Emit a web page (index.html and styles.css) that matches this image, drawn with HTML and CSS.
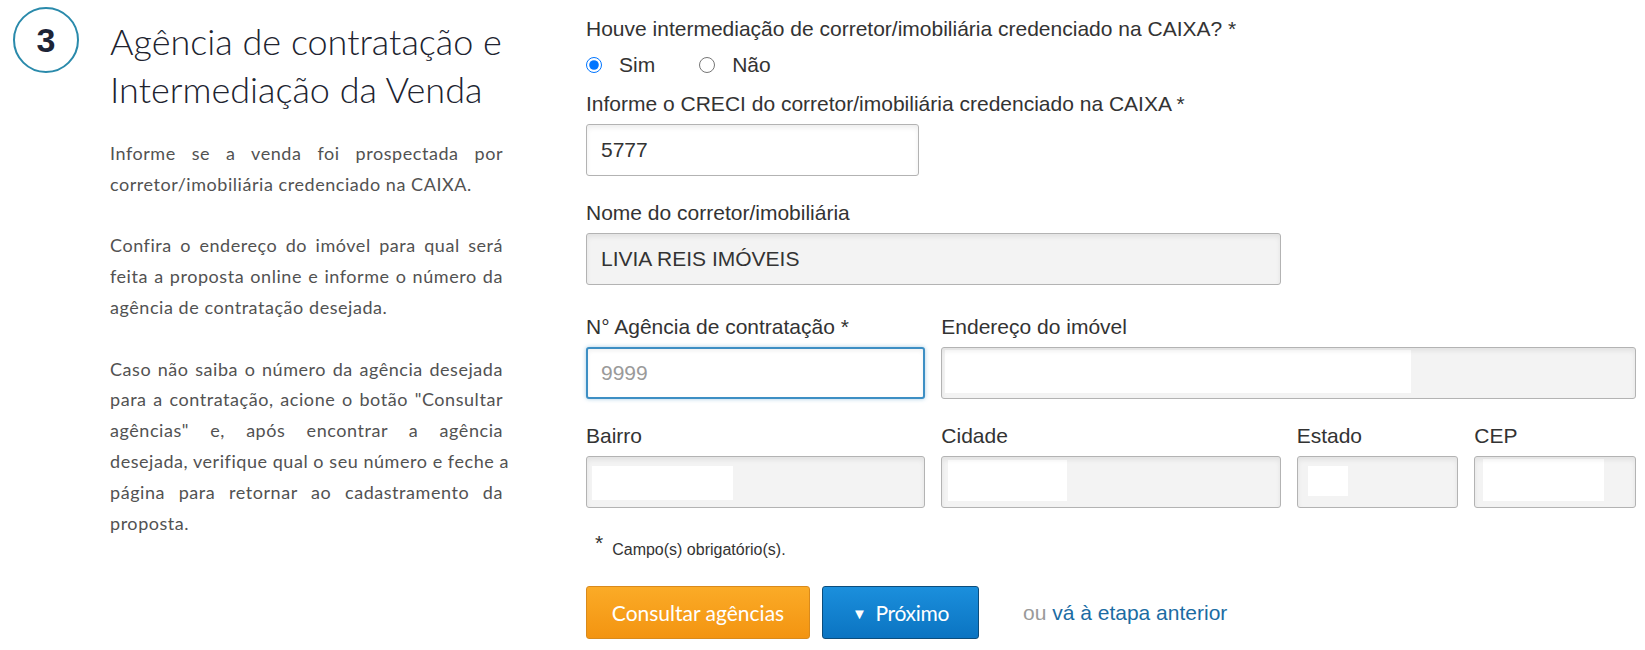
FILE: index.html
```html
<!DOCTYPE html>
<html lang="pt-BR">
<head>
<meta charset="utf-8">
<title>Agência de contratação e Intermediação da Venda</title>
<link rel="stylesheet" href="styles.css">
</head>
<body>
<main class="page">
  <aside class="intro">
    <header class="step-head">
      <div class="step-num">3</div>
      <h2 class="step-title">Agência de contratação e<br>Intermediação da Venda</h2>
    </header>
    <div class="step-text">
      <p>
        <span class="jl">Informe se a venda foi prospectada por</span>
        <span class="ll">corretor/imobiliária credenciado na CAIXA.</span>
      </p>
      <p>
        <span class="jl">Confira o endereço do imóvel para qual será</span>
        <span class="jl">feita a proposta online e informe o número da</span>
        <span class="ll">agência de contratação desejada.</span>
      </p>
      <p>
        <span class="jl">Caso não saiba o número da agência desejada</span>
        <span class="jl">para a contratação, acione o botão "Consultar</span>
        <span class="jl">agências" e, após encontrar a agência</span>
        <span class="jl">desejada, verifique qual o seu número e feche a</span>
        <span class="jl">página para retornar ao cadastramento da</span>
        <span class="ll">proposta.</span>
      </p>
    </div>
  </aside>

  <form class="form">
    <div class="field field-radio">
      <div class="label">Houve intermediação de corretor/imobiliária credenciado na CAIXA? *</div>
      <div class="radios">
        <label class="radio"><input type="radio" name="inter" checked> Sim</label>
        <label class="radio"><input type="radio" name="inter"> Não</label>
      </div>
    </div>

    <div class="row">
      <div class="field span-6">
        <label class="label" for="creci">Informe o CRECI do corretor/imobiliária credenciado na CAIXA *</label>
        <input class="input input-creci" id="creci" type="text" value="5777">
      </div>
    </div>

    <div class="row row-wide-gap">
      <div class="field span-4">
        <label class="label" for="nome">Nome do corretor/imobiliária</label>
        <input class="input input-ro" id="nome" type="text" value="LIVIA REIS IMÓVEIS" readonly>
      </div>
    </div>

    <div class="row">
      <div class="field span-2">
        <label class="label" for="agencia">N° Agência de contratação *</label>
        <input class="input input-focus" id="agencia" type="text" placeholder="9999">
      </div>
      <div class="field span-4">
        <label class="label" for="endereco">Endereço do imóvel</label>
        <input class="input input-ro redact-endereco" id="endereco" type="text" readonly>
      </div>
    </div>

    <div class="row">
      <div class="field span-2">
        <label class="label" for="bairro">Bairro</label>
        <input class="input input-ro redact-bairro" id="bairro" type="text" readonly>
      </div>
      <div class="field span-2">
        <label class="label" for="cidade">Cidade</label>
        <input class="input input-ro redact-cidade" id="cidade" type="text" readonly>
      </div>
      <div class="field span-1">
        <label class="label" for="estado">Estado</label>
        <input class="input input-ro redact-estado" id="estado" type="text" readonly>
      </div>
      <div class="field span-1">
        <label class="label" for="cep">CEP</label>
        <input class="input input-ro redact-cep" id="cep" type="text" readonly>
      </div>
    </div>

    <p class="footnote"><span class="star">*</span>Campo(s) obrigatório(s).</p>

    <div class="actions">
      <button type="button" class="btn btn-orange">Consultar agências</button>
      <button type="button" class="btn btn-blue"><span class="caret">&#9660;</span>Próximo</button>
      <span class="back">ou <a href="#" class="back-link">vá à etapa anterior</a></span>
    </div>
  </form>
</main>
</body>
</html>
```
FILE: styles.css
```css
* { box-sizing: border-box; }

html, body {
  margin: 0;
  padding: 0;
  background: #fff;
}

.page {
  display: flex;
  align-items: flex-start;
  width: 1645px;
}

/* ---------- left column ---------- */
.intro {
  width: 503px;
  flex: none;
  padding-left: 13px;
  padding-top: 7px;
}

.step-head {
  display: flex;
  align-items: flex-start;
  gap: 31px;
}

.step-num {
  width: 66px;
  height: 66px;
  flex: none;
  border: 2px solid #2a8aab;
  border-radius: 50%;
  display: flex;
  align-items: center;
  justify-content: center;
  font-family: "Liberation Sans", Arial, sans-serif;
  font-weight: bold;
  font-size: 34px;
  color: #1d2437;
}

.step-title {
  margin: 10px 0 0;
  font-family: Lato, "Noto Sans", sans-serif;
  font-weight: 300;
  font-size: 36px;
  line-height: 48px;
  color: #20232f;
  white-space: nowrap;
}

.step-text {
  margin-left: 97px;
  width: 393px;
  margin-top: 25px;
  font-family: Lato, "Noto Sans", sans-serif;
  font-size: 18px;
  letter-spacing: 0.55px;
  line-height: 30.8px;
  color: #525252;
}

.step-text p {
  margin: 0 0 30.8px;
}

.jl {
  display: block;
  text-align: justify;
  text-align-last: justify;
  white-space: nowrap;
}

.ll {
  display: block;
  text-align: left;
}

/* ---------- right column ---------- */
.form {
  margin-left: 83px;
  width: 1050px;
  padding-top: 17px;
  font-family: "Liberation Sans", Arial, sans-serif;
  color: #333;
}

.row {
  display: grid;
  grid-template-columns: repeat(6, 1fr);
  column-gap: 16px;
  margin-bottom: 25px;
}

.row-wide-gap { margin-bottom: 30px; }

.span-6 { grid-column: span 6; }
.span-4 { grid-column: span 4; }
.span-2 { grid-column: span 2; }
.span-1 { grid-column: span 1; }

.field {
  display: flex;
  flex-direction: column;
}

.label {
  display: block;
  font-size: 21px;
  line-height: 24px;
  margin-bottom: 8px;
  color: #333;
  white-space: nowrap;
}

.radios {
  display: flex;
  align-items: center;
  margin-top: 4px;
  margin-bottom: 15px;
  height: 24px;
}

.radio {
  display: flex;
  align-items: center;
  font-size: 21px;
  line-height: 24px;
  color: #333;
  gap: 17px;
  margin-right: 44px;
}

.radio input {
  width: 16px;
  height: 16px;
  margin: 0;
}

.input {
  height: 52px;
  width: 100%;
  border: 1px solid #b3b3b3;
  border-radius: 3px;
  padding: 0 14px;
  font-family: "Liberation Sans", Arial, sans-serif;
  font-size: 21px;
  color: #333;
  background: #fff;
  box-shadow: inset 0 3px 5px rgba(0, 0, 0, 0.07);
  outline: none;
}

.input-creci { width: 333px; }

.input-ro {
  background-color: #f3f3f3;
}

.input-focus {
  border: 2px solid #3d8fc4;
  padding-left: 13px;
  box-shadow: inset 0 2px 4px rgba(0, 0, 0, 0.06), 0 0 4px rgba(61, 143, 196, 0.45);
}

.input-focus::placeholder { color: #9a9a9a; }

.redact-endereco,
.redact-bairro,
.redact-cidade,
.redact-estado,
.redact-cep {
  background-image: linear-gradient(#fff, #fff);
  background-repeat: no-repeat;
}

.redact-endereco { background-position: 3px 2px; background-size: 466px 43px; }
.redact-bairro   { background-position: 5px 9px; background-size: 141px 34px; }
.redact-cidade   { background-position: 6px 3px; background-size: 119px 41px; }
.redact-estado   { background-position: 10px 9px; background-size: 40px 30px; }
.redact-cep      { background-position: 8px 2px; background-size: 121px 42px; }

.footnote {
  margin: 5px 0 0;
  font-size: 16px;
  line-height: 20px;
  color: #333;
  padding-left: 9px;
}

.star {
  font-size: 21px;
  vertical-align: 5px;
  margin-right: 9px;
}

.actions {
  display: flex;
  align-items: center;
  margin-top: 26px;
}

.btn {
  height: 53px;
  border-radius: 3px;
  font-family: Lato, "Noto Sans", sans-serif;
  font-size: 21px;
  color: #fff;
  cursor: pointer;
  display: flex;
  align-items: center;
  justify-content: center;
  padding: 0;
}

.btn-orange {
  width: 224px;
  border: 1px solid #d98a1c;
  background: linear-gradient(#fbab27, #f39411);
}

.btn-blue {
  width: 157px;
  margin-left: 12px;
  border: 1px solid #0c4d7c;
  background: linear-gradient(#1b8fdc, #0b74c2);
  letter-spacing: -0.3px;
}

.caret {
  font-size: 15px;
  margin-right: 9px;
}

.back {
  margin-left: 44px;
  font-size: 21px;
  color: #9a9a9a;
}

.back-link {
  color: #1b6ca3;
  text-decoration: none;
}
```
